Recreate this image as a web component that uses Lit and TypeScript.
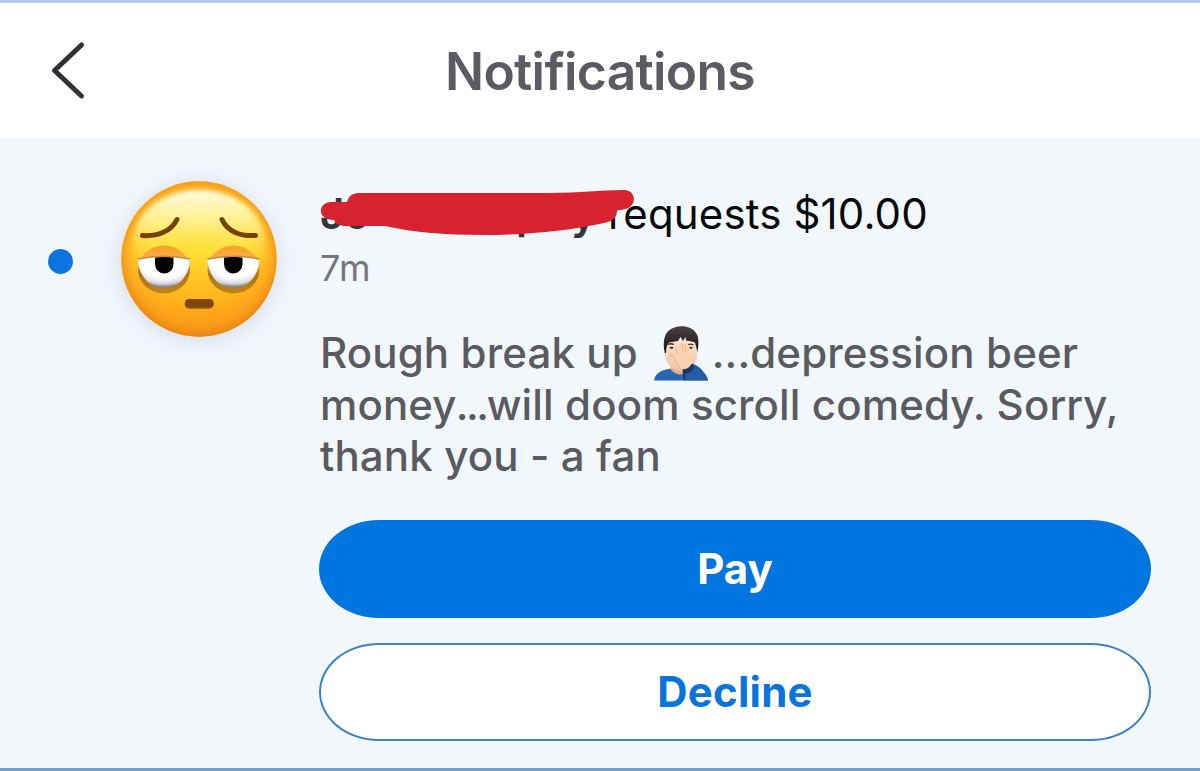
import { LitElement, html, css } from "lit";
import { customElement } from "lit/decorators.js";

@customElement("weary-avatar")
class WearyAvatar extends LitElement {
  static styles = css`
    :host { display: block; width: 156px; height: 156px; border-radius: 50%; box-shadow: 0 3px 22px rgba(60, 80, 120, 0.17); }
    svg { display: block; overflow: visible; }
  `;
  render() {
    return html`<svg width="156" height="156" viewBox="0 0 156 156">
      <defs>
        <linearGradient id="base" x1="0" y1="0" x2="0" y2="1">
          <stop offset="0" stop-color="#fdbc20" /><stop offset=".15" stop-color="#ffd83a" />
          <stop offset=".48" stop-color="#ffd92a" /><stop offset=".75" stop-color="#ffb51c" /><stop offset="1" stop-color="#f99c12" />
        </linearGradient>
        <radialGradient id="rim" cx=".5" cy=".48" r=".52">
          <stop offset=".6" stop-color="#ff9d1c" stop-opacity="0" /><stop offset=".86" stop-color="#fd951c" stop-opacity=".5" />
          <stop offset="1" stop-color="#e58213" stop-opacity=".9" />
        </radialGradient>
        <linearGradient id="shine" x1="0" y1="0" x2="0" y2="1">
          <stop offset="0" stop-color="#fffce0" /><stop offset=".3" stop-color="#fff598" stop-opacity=".85" /><stop offset=".7" stop-color="#ffe83c" stop-opacity="0" />
        </linearGradient>
        <linearGradient id="lid" x1="0" y1="0" x2="0" y2="1">
          <stop offset="0" stop-color="#f3a322" /><stop offset=".3" stop-color="#ffae4c" /><stop offset=".6" stop-color="#ae7318" /><stop offset="1" stop-color="#c08610" />
        </linearGradient>
        <radialGradient id="white" cx=".5" cy=".25" r=".7">
          <stop offset=".6" stop-color="#fff" /><stop offset=".85" stop-color="#d9d8df" /><stop offset="1" stop-color="#89817c" />
        </radialGradient>
        <filter id="soft"><feGaussianBlur stdDeviation=".7" /></filter>
        <filter id="softer"><feGaussianBlur stdDeviation="2" /></filter>
      </defs>
      <circle cx="78" cy="78" r="77.700" fill="url(#base)" />
      <circle cx="78" cy="78" r="77.700" fill="url(#rim)" />
      <ellipse cx="78" cy="62" rx="66" ry="53" fill="url(#shine)" filter="url(#softer)" />
      <g fill="none" stroke="#764108" stroke-width="5" stroke-linecap="round">
        <path d="M21.500 54.500C36 55.500 50 51 56 38.500" /><path d="M101 38.500C106 50 119 55.500 134.500 54.500" />
      </g>
      <g>
        <ellipse cx="43" cy="88.500" rx="26" ry="24" fill="url(#lid)" filter="url(#soft)" />
        <path d="M17 78Q43 73 69 78C69 94 57 107.500 43 107.500S17 94 17 78Z" fill="url(#white)" />
        <path d="M34 76.500Q43 75 52.500 76.500V83a9.250 9.500 0 0 1-18.500 0Z" fill="#050404" />
        <path d="M17 78Q43 72.500 69 78" fill="none" stroke="#c08a3c" stroke-width="1.500" />
      </g>
      <g>
        <ellipse cx="112.500" cy="88.500" rx="26" ry="24" fill="url(#lid)" filter="url(#soft)" />
        <path d="M86.500 78Q112.500 73 138.500 78C138.500 94 126.500 107.500 112.500 107.500S86.500 94 86.500 78Z" fill="url(#white)" />
        <path d="M103 76.500Q112.500 75 121.500 76.500V83a9.250 9.500 0 0 1-18.500 0Z" fill="#050404" />
        <path d="M86.500 78Q112.500 72.500 138.500 78" fill="none" stroke="#c08a3c" stroke-width="1.500" />
      </g>
      <rect x="63.500" y="118" width="29.500" height="10" rx="5" fill="#a8690f" />
      <rect x="64" y="118" width="28.500" height="8.500" rx="4.200" fill="#7e470a" />
    </svg>`;
  }
}

@customElement("facepalm-emoji")
class FacepalmEmoji extends LitElement {
  static styles = css`
    :host { display: inline-block; width: 54px; height: 40px; margin: 0 4px 0 4.500px; vertical-align: baseline; }
    svg { display: block; overflow: visible; margin-top: -2px; }
  `;
  render() {
    return html`<svg width="54" height="55" viewBox="0 0 54 55">
      <defs>
        <linearGradient id="skin" x1="0" y1="0" x2="0" y2="1"><stop offset="0" stop-color="#ffe6d0" /><stop offset="1" stop-color="#efc3a0" /></linearGradient>
        <linearGradient id="hair" x1="0" y1="0" x2="0" y2="1"><stop offset="0" stop-color="#4a4242" /><stop offset="1" stop-color="#171315" /></linearGradient>
      </defs>
      <path d="M0 54.500C1 47 8 43.500 18 42.500H38C46 43 53 47 54 54.500Z" fill="#2b66b6" />
      <path d="M17 40H33V46C30 49.500 22 49.500 17 44Z" fill="#e2ac86" />
      <path d="M11 13V28C11 38 19 45 27 45S43.500 38 43.500 28V13Z" fill="url(#skin)" />
      <path d="M10.800 27C8 14 11 5 19 2C27-1.500 38 0 42 7C45.500 11 44.500 20 43.500 26L41 16.500C38 15.500 35 15 32 14.500L31.500 11L29 15L26.500 11L24 15L15 16.500C13 19 12 22 12 27Z" fill="url(#hair)" />
      <path d="M13.500 18.500Q17 17 20 18.500M34 18.500Q37 17.500 39.500 19" fill="none" stroke="#4a3024" stroke-width="1.300" />
      <ellipse cx="17.500" cy="21.800" rx="2" ry="1" fill="#38251d" /><ellipse cx="37" cy="21.800" rx="1.600" ry="1" fill="#38251d" />
      <path d="M30 45C26 42 23 37 21 32L16 27.500C15 25.500 17 25 18.500 26L23 29L21 21.500C21 18.500 23.500 18.500 24.500 21L27 17C28 15 30 16 30 18C32 17 35 19 35 22L36 29C38 32 39 35 38.500 40Z" fill="#fbd2b1" />
      <path d="M16 27L21 33C22 37 25 41 29 44M15 29L19 31M23 29L21.500 22M29 26L28 18M32 27L31.500 19" fill="none" stroke="#dca985" stroke-width=".7" />
      <path d="M29 44C33 43 36 41 38 37.500C45 40 50 44 54 54.500H31Z" fill="#255ca6" />
      <path d="M28.500 43C32 44 36 42 37.500 38L40.500 40.500C40 44 35 48 31 48V54.500H29.500Z" fill="#20365a" />
    </svg>`;
  }
}

@customElement("app-root")
class AppRoot extends LitElement {
  static styles = css`
    :host { display: block; font-family: Inter, "Liberation Sans", sans-serif; }
    .screen { box-sizing: border-box; height: 771px; display: flex; flex-direction: column; overflow: hidden; background: #f2f7fc; border-top: 3px solid #b3cfea; border-bottom: 3px solid #759fc8; }
    header { flex: none; box-sizing: border-box; height: 135px; background: #fff; display: grid; grid-template-columns: 120px 1fr 120px; align-items: center; }
    .back { display: block; margin-left: 48px; }
    h1 { margin: 0; text-align: center; font-size: 51.500px; line-height: 62px; font-weight: 600; letter-spacing: -0.680px; color: #5b5c63; white-space: nowrap; }
    .row { display: grid; grid-template-columns: 73px 204px 923px; padding-top: 43px; }
    .dot { width: 25px; height: 25px; border-radius: 50%; background: #0b74de; margin: 68px 0 0 48px; }
    weary-avatar { margin-left: 48px; }
    .body { margin-left: 42px; width: 832px; }
    .summary { position: relative; height: 66px; line-height: 66px; font-size: 42px; white-space: nowrap; display: flex; }
    .name { width: 290px; margin-left: 1px; flex: none; font-weight: 600; color: #34363b; display: flex; }
    .tail { margin-left: 146px; }
    .last { margin-left: 29px; }
    .action { margin-left: -2px; letter-spacing: 0.150px; color: #08090b; }
    .mark { position: absolute; left: 1px; top: 8px; }
    .time { height: 43px; line-height: 43px; padding-left: 1px; font-size: 36px; letter-spacing: 0.500px; color: #74767c; }
    .note { margin: 37px 0 0; padding-left: 1px; font-size: 42px; line-height: 51.500px; font-weight: 500; letter-spacing: 0.130px; color: #595b61; white-space: nowrap; }
    .line { display: block; height: 51.500px; }
    .tight { letter-spacing: -2.400px; margin-left: -1px; }
    .actions { display: flex; flex-direction: column; gap: 25px; margin-top: 38px; }
    button { box-sizing: border-box; width: 832px; height: 98px; padding: 0; border-radius: 60px / 49px; font: 700 42px/98px Inter, "Liberation Sans", sans-serif; border: 0; }
    .pay { background: #0074df; color: #fff; }
    .decline { background: #fff; color: #0874dc; border: 2px solid #3c82c8; line-height: 94px; letter-spacing: 0.250px; }
  `;
  render() {
    return html`<div class="screen">
      <header>
        <svg class="back" width="40" height="60" viewBox="0 0 40 60"><path d="M33.500 4L6.500 29.500L33.500 55" fill="none" stroke="#303136" stroke-width="5" stroke-linecap="round" stroke-linejoin="round" /></svg>
        <h1>Notifications</h1>
      </header>
      <main class="row">
        <div class="dot"></div>
        <weary-avatar></weary-avatar>
        <section class="body">
          <div class="summary">
            <span class="name"><span>Jo</span><span class="tail">p</span><span class="last">y</span></span>
            <span class="action">requests $10.00</span>
            <svg class="mark" width="316" height="50" viewBox="0 0 316 50"><path d="M11 13H27C29 6 33 4 40 4H230C260 4 280 1 304 1C317 1 317 18 305 20L297 21C297 29 293 32 284 34C248 42 204 46 164 46C123 46 91 43 65 37H27C20 37 16 35 14 31C-3 31-3 14 11 13Z" fill="#d8222f" /></svg>
          </div>
          <div class="time">7m</div>
          <p class="note"><span class="line">Rough break up <facepalm-emoji></facepalm-emoji>...depression beer</span><span class="line">money<span class="tight">...</span>will doom scroll comedy. Sorry,</span><span class="line">thank you - a fan</span></p>
          <div class="actions"><button class="pay">Pay</button><button class="decline">Decline</button></div>
        </section>
      </main>
    </div>`;
  }
}
